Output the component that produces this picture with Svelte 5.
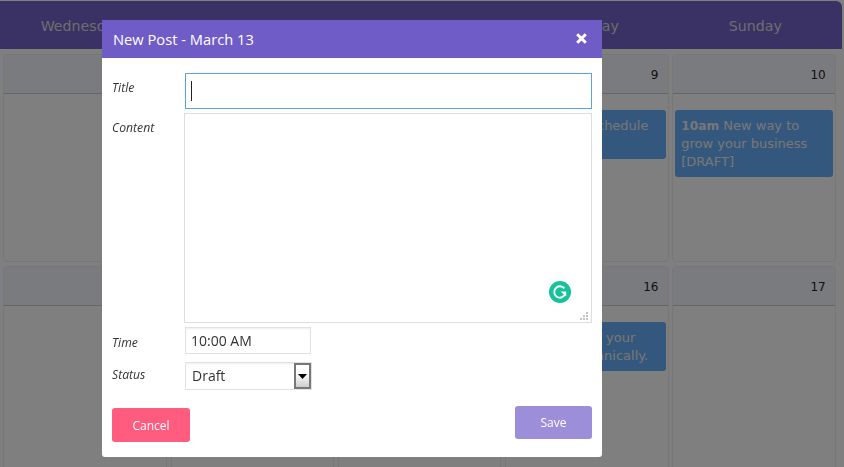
<script>
  const days = ['Wednesday', 'Thursday', 'Friday', 'Saturday', 'Sunday'];
  const rows = [
    [
      { n: 6 }, { n: 7 }, { n: 8 },
      { n: 9, time: '9am', text: 'Social schedule [DRAFT]' },
      { n: 10, time: '10am', text: 'New way to grow your business [DRAFT]' }
    ],
    [
      { n: 13 }, { n: 14 }, { n: 15 },
      { n: 16, time: '1pm', text: 'Growing your business organically.' },
      { n: 17 }
    ]
  ];
  const grip = [[7, 0], [4, 3], [7, 3], [1, 6], [4, 6], [7, 6]];
</script>

<div class="page">
  <header class="week">
    {#each days as d}
      <div class="day">{d}</div>
    {/each}
  </header>
  <div class="grid">
    {#each rows as row}
      {#each row as c}
        <div class="cell">
          <div class="num">{c.n}</div>
          <div class="body">
            {#if c.time}
              <div class="event"><b>{c.time}</b> {c.text}</div>
            {/if}
          </div>
        </div>
      {/each}
    {/each}
  </div>
</div>

<div class="backdrop"></div>

<div class="modal">
  <div class="mhead">
    <span>New Post - March 13</span>
    <svg class="close" width="11" height="11" viewBox="0 0 11 11"><path d="M1.2 1.2l8.6 8.6M9.8 1.2l-8.6 8.6" stroke="#fff" stroke-width="3"/></svg>
  </div>
  <div class="form">
    <div class="row r-title">
      <span class="label">Title</span>
      <div class="title-box"><i class="caret"></i></div>
    </div>
    <div class="row r-content">
      <span class="label">Content</span>
      <div class="area">
        <textarea></textarea>
        <svg class="gram" width="22" height="22" viewBox="0 0 22 22">
          <circle cx="11" cy="11" r="11" fill="#15c39a"/>
          <path d="M15.4 7.4a5.7 5.7 0 1 0 1 5.2" fill="none" stroke="#fff" stroke-width="1.9"/>
          <path d="M11.6 10.4h5.6v5.2z" fill="#fff"/>
        </svg>
        <svg class="grip" width="9" height="8" viewBox="0 0 9 8">
          {#each grip as g}
            <rect x={g[0]} y={g[1]} width="2" height="2" fill="#c4c4c4"/>
          {/each}
        </svg>
      </div>
    </div>
    <div class="row r-time">
      <span class="label">Time</span>
      <div class="time">10:00 AM</div>
    </div>
    <div class="row r-status">
      <span class="label">Status</span>
      <div class="select">
        <span>Draft</span>
        <span class="arrow"><svg width="9" height="5" viewBox="0 0 9 5"><path d="M0 0h9L4.5 5z" fill="#000"/></svg></span>
      </div>
    </div>
    <div class="actions">
      <button class="cancel">Cancel</button>
      <button class="save">Save</button>
    </div>
  </div>
</div>

<style>
  :global(body) {
    margin: 0;
    background: #fff;
    overflow: hidden;
  }
  .page {
    width: 844px;
    height: 467px;
    overflow: hidden;
    box-sizing: border-box;
    padding-top: 1px;
    font-family: "DejaVu Sans", sans-serif;
  }
  .week {
    display: grid;
    grid-template-columns: repeat(5, 1fr);
    height: 48px;
    margin-right: 2px;
    background: #7563c9;
    border-radius: 0 6px 0 0;
    align-items: center;
  }
  .day {
    text-align: center;
    font-size: 14.2px;
    color: #ddd;
    padding: 2px 5px 0 0;
  }
  .grid {
    display: grid;
    grid-template-columns: repeat(5, 163.5px);
    grid-auto-rows: 208px;
    column-gap: 3.75px;
    row-gap: 4px;
    padding: 5px 0 0 3.25px;
  }
  .cell {
    border: 1px solid #eee;
    border-radius: 4px;
    box-sizing: border-box;
    background: #fff;
  }
  .num {
    height: 38px;
    background: #f4f6ff;
    border-bottom: 1px solid #ccc;
    border-radius: 4px 4px 0 0;
    text-align: right;
    font-size: 12px;
    line-height: 41px;
    padding-right: 9px;
    color: #222;
  }
  .body {
    padding: 16px 2px;
  }
  .event {
    background: #68aefa;
    border-radius: 3px;
    color: #eee;
    font-size: 13px;
    line-height: 18px;
    padding: 7px 6px 6px;
  }
  .event b {
    font-size: 12.2px;
  }
  .backdrop {
    position: fixed;
    inset: 0;
    background: rgba(0, 0, 0, 0.5);
  }
  .modal {
    position: fixed;
    left: 102px;
    top: 20px;
    width: 500px;
    height: 437px;
    background: #fff;
    border-radius: 0 0 3px 3px;
    font-family: "Open Sans", sans-serif;
  }
  .mhead {
    height: 38px;
    background: #705cc7;
    color: #fff;
    font-size: 14.7px;
    display: flex;
    align-items: center;
    justify-content: space-between;
    padding: 0 15px 0 11px;
  }
  .close {
    margin-top: -2px;
  }
  .form {
    padding: 15px 10px 0 10px;
    position: relative;
  }
  .row {
    display: flex;
  }
  .label {
    width: 72px;
    font-style: italic;
    font-size: 12.2px;
    color: #333;
  }
  .r-title { height: 40px; }
  .r-title .label { padding-top: 6px; }
  .title-box {
    width: 408px;
    height: 36px;
    margin-left: 1px;
    box-sizing: border-box;
    border: 1px solid #5ba3e0;
    display: flex;
    align-items: center;
    padding-left: 5px;
  }
  .caret {
    width: 1px;
    height: 20px;
    background: #222;
  }
  .r-content { height: 214px; }
  .r-content .label { padding-top: 6px; }
  .area {
    position: relative;
    width: 408px;
    height: 210px;
  }
  textarea {
    display: block;
    width: 100%;
    height: 100%;
    box-sizing: border-box;
    border: 1px solid #ddd;
    outline: 0;
    margin: 0;
    padding: 0;
    background: #fff;
    resize: none;
  }
  .gram {
    position: absolute;
    right: 21px;
    bottom: 20px;
  }
  .grip {
    position: absolute;
    right: 4px;
    bottom: 3px;
  }
  .r-time { height: 35px; }
  .r-time .label { padding-top: 7px; }
  .time {
    width: 126px;
    height: 27px;
    margin-left: 1px;
    border: 1px solid #e2e2e2;
    box-sizing: border-box;
    font-size: 14px;
    line-height: 26px;
    padding-left: 5px;
    color: #333;
    box-shadow: inset 0 1px 2px #eee;
  }
  .r-status { height: 28px; }
  .r-status .label { line-height: 25px; }
  .select {
    width: 127px;
    height: 28px;
    margin-left: 1px;
    border: 1px solid #e2e2e2;
    box-sizing: border-box;
    font-size: 14px;
    line-height: 26px;
    padding-left: 6px;
    color: #333;
    display: flex;
    justify-content: space-between;
    box-shadow: inset 0 1px 2px #eee;
  }
  .arrow {
    width: 17px;
    height: 26px;
    box-sizing: border-box;
    border: 2px solid #777;
    background: linear-gradient(#fff 40%, #ccc);
    display: flex;
    align-items: center;
    justify-content: center;
  }
  .actions {
    display: flex;
    justify-content: space-between;
    align-items: flex-start;
    margin-top: 16px;
  }
  button {
    border: 0;
    color: #fff;
    font-family: "Open Sans", sans-serif;
    font-size: 12px;
    padding: 0;
    border-radius: 3px;
  }
  .cancel {
    width: 78px;
    height: 34px;
    background: #ff5c80;
    margin-top: 2px;
  }
  .save {
    width: 77px;
    height: 33px;
    background: #9c8ed8;
  }
</style>
